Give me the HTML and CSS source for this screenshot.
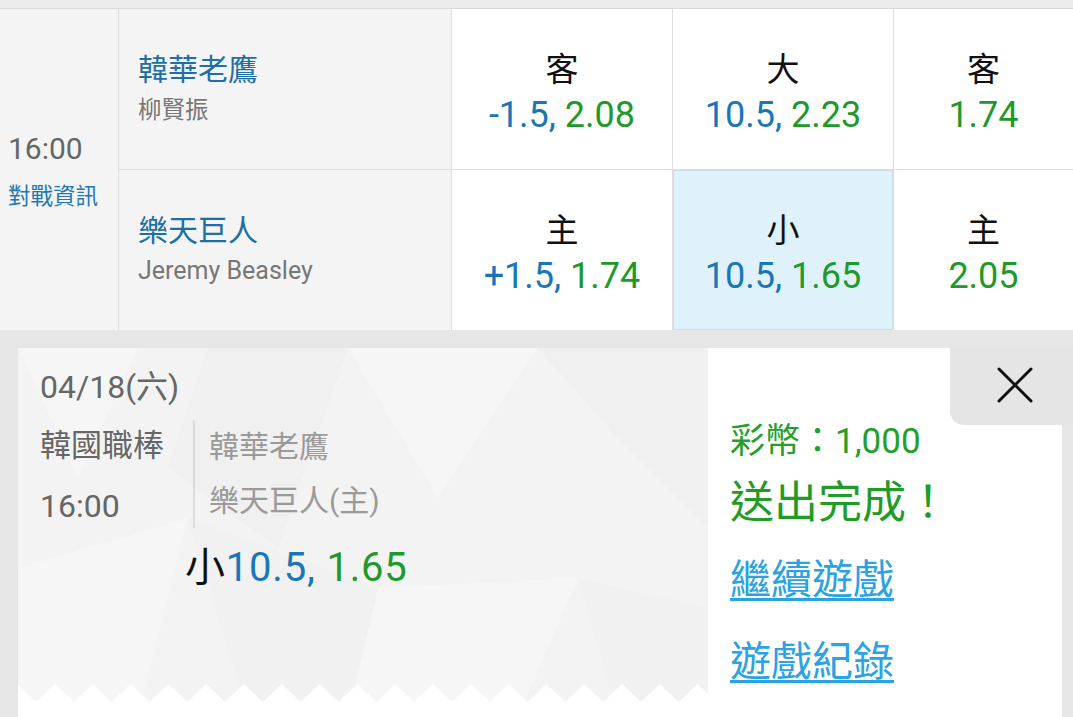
FILE: index.html
```html
<!DOCTYPE html>
<html lang="zh-Hant">
<head>
  <meta charset="UTF-8" />
  <meta name="viewport" content="width=device-width, initial-scale=1.0" />
  <title>投注完成</title>
  <link rel="stylesheet" href="styles.css">
</head>
<body>
  <div class="top-strip"></div>

  <!-- 賽事列 -->
  <div class="board">
    <div class="cell time-cell">
      <div class="time">16:00</div>
      <a class="info" href="#">對戰資訊</a>
    </div>

    <div class="cell team-cell">
      <div class="team">韓華老鷹</div>
      <div class="pitcher">柳賢振</div>
    </div>
    <div class="cell odd-cell">
      <div class="pick">客</div>
      <div class="odd"><span class="line">-1.5,</span> <span class="price">2.08</span></div>
    </div>
    <div class="cell odd-cell">
      <div class="pick">大</div>
      <div class="odd"><span class="line">10.5,</span> <span class="price">2.23</span></div>
    </div>
    <div class="cell odd-cell">
      <div class="pick">客</div>
      <div class="odd"><span class="price">1.74</span></div>
    </div>

    <div class="cell team-cell">
      <div class="team">樂天巨人</div>
      <div class="pitcher latin">Jeremy Beasley</div>
    </div>
    <div class="cell odd-cell">
      <div class="pick">主</div>
      <div class="odd"><span class="line">+1.5,</span> <span class="price">1.74</span></div>
    </div>
    <div class="cell odd-cell selected">
      <div class="pick">小</div>
      <div class="odd"><span class="line">10.5,</span> <span class="price">1.65</span></div>
    </div>
    <div class="cell odd-cell">
      <div class="pick">主</div>
      <div class="odd"><span class="price">2.05</span></div>
    </div>
  </div>

  <!-- 注單 -->
  <div class="ticket">
    <div class="slip">
      <svg class="facets" width="690" height="369" viewBox="0 0 690 369">
        <polygon points="0,0 120,0 60,130" fill="#f6f6f6" />
        <polygon points="190,0 330,0 260,200 150,120" fill="#f0f0f0" />
        <polygon points="330,0 520,0 420,150" fill="#f6f6f6" />
        <polygon points="520,0 690,0 690,180 600,90" fill="#f0f0f0" />
        <polygon points="0,220 170,170 120,369 0,369" fill="#f6f6f6" />
        <polygon points="170,170 360,240 330,369 230,369" fill="#f1f1f1" />
        <polygon points="360,240 560,230 500,369 330,369" fill="#f6f6f6" />
        <polygon points="560,230 690,260 690,369 600,369" fill="#f1f1f1" />
      </svg>

      <div class="slip-body">
        <div class="date">04/18(六)</div>
        <div class="match">
          <div class="league">
            <div>韓國職棒</div>
            <div class="clock">16:00</div>
          </div>
          <div class="teams">
            <div>韓華老鷹</div>
            <div>樂天巨人(主)</div>
          </div>
        </div>
        <div class="choice">小<span class="line">10.5,</span> <span class="price">1.65</span></div>
      </div>

      <svg class="zigzag" width="690" height="34">
        <defs>
          <pattern id="teeth" x="18.1" y="0" width="37.8" height="34" patternUnits="userSpaceOnUse">
            <polygon points="0,19 18.9,1 37.8,19 37.8,34 0,34" fill="#fff" />
          </pattern>
        </defs>
        <rect width="690" height="34" fill="url(#teeth)" />
      </svg>
    </div>

    <div class="result">
      <div class="coins">彩幣：1,000</div>
      <div class="done">送出完成！</div>
      <a class="link" href="#">繼續遊戲</a>
      <a class="link" href="#">遊戲紀錄</a>
    </div>

    <button class="close" aria-label="關閉">
      <svg width="36" height="36" viewBox="0 0 36 36">
        <path d="M2 2 L34 34 M34 2 L2 34" stroke="#111" stroke-width="3" stroke-linecap="round" />
      </svg>
    </button>
  </div>
</body>
</html>
```

FILE: styles.css
```css
* {
  box-sizing: border-box;
}
body {
  margin: 0;
  height: 717px;
  overflow: hidden;
  background: #e6e6e6;
  font-family: Roboto, "Noto Sans CJK TC", sans-serif;
  color: #222;
}
a {
  text-decoration: none;
}

.top-strip {
  height: 9px;
  background: #ececec;
  border-bottom: 1px solid #d9d9d9;
}

/* 賽事列 */
.board {
  display: grid;
  grid-template-columns: 118px 332px 220px 220px 1fr;
  grid-template-rows: 160px 160px;
  gap: 1px;
  background: #dedede;
}
.cell {
  background: #fff;
}
.time-cell {
  grid-row: 1 / span 2;
  background: #f4f4f4;
  display: flex;
  flex-direction: column;
  justify-content: center;
  padding: 5px 0 0 8px;
}
.time {
  font-size: 30px;
  line-height: 40px;
  color: #666;
}
.info {
  margin-top: 7px;
  font-size: 22.5px;
  line-height: 40px;
  color: #1f78b4;
}
.team-cell {
  background: #f4f4f4;
  padding: 41px 0 0 19px;
}
.team {
  font-size: 30px;
  line-height: 40px;
  color: #1d6fa5;
}
.pitcher {
  font-size: 23.5px;
  line-height: 40px;
  color: #777;
}
.pitcher.latin {
  font-size: 25px;
}
.odd-cell {
  padding-top: 41px;
  text-align: center;
}
.odd-cell.selected {
  background: #dff2fc;
  box-shadow: inset 0 0 0 1px #c6dfee;
}
.pick {
  font-size: 33px;
  line-height: 40px;
  color: #111;
}
.odd {
  font-size: 36px;
  line-height: 50px;
}
.line {
  color: #1a76b8;
}
.price {
  color: #1f9a2a;
}

/* 注單 */
.ticket {
  position: relative;
  display: flex;
  height: 369px;
  margin: 18px 11px 0 18px;
}
.slip {
  position: relative;
  width: 690px;
  background: #f3f3f3;
  overflow: hidden;
}
.facets {
  position: absolute;
  top: 0;
  left: 0;
}
.zigzag {
  position: absolute;
  left: 0;
  bottom: 0;
}
.slip-body {
  position: relative;
  padding: 19px 0 0 22px;
}
.date {
  font-size: 32px;
  line-height: 40px;
  color: #666;
}
.match {
  display: flex;
  align-items: flex-start;
  margin-top: 9px;
}
.league {
  width: 153px;
  font-size: 31px;
  line-height: 60px;
  color: #666;
}
.league .clock {
  font-size: 32px;
}
.teams {
  margin-top: 4px;
  padding-left: 14px;
  border-left: 2px solid #dcdcdc;
  font-size: 30px;
  line-height: 54px;
  color: #9a9a9a;
}
.choice {
  margin: 6px 0 0 145px;
  font-size: 40px;
  line-height: 52px;
  letter-spacing: 0.8px;
  color: #111;
}

.result {
  flex: 1;
  background: #fff;
  padding: 72px 0 0 22px;
}
.coins {
  font-size: 35px;
  line-height: 44px;
  color: #22a02a;
}
.done {
  margin-top: 11px;
  font-size: 44px;
  line-height: 56px;
  color: #1f9c25;
}
.link {
  display: table;
  font-size: 41px;
  line-height: 56px;
  color: #2aa2e4;
  text-decoration: underline;
  text-decoration-thickness: 3px;
  text-underline-offset: 4px;
}
.link:nth-of-type(1) {
  margin-top: 21px;
}
.link:nth-of-type(2) {
  margin-top: 26px;
}

.close {
  position: absolute;
  top: 0;
  right: -11px;
  width: 123px;
  height: 77px;
  display: flex;
  align-items: center;
  padding: 0 0 3px 47px;
  border: none;
  background: #e5e5e5;
  border-bottom-left-radius: 14px;
  cursor: pointer;
}
```
